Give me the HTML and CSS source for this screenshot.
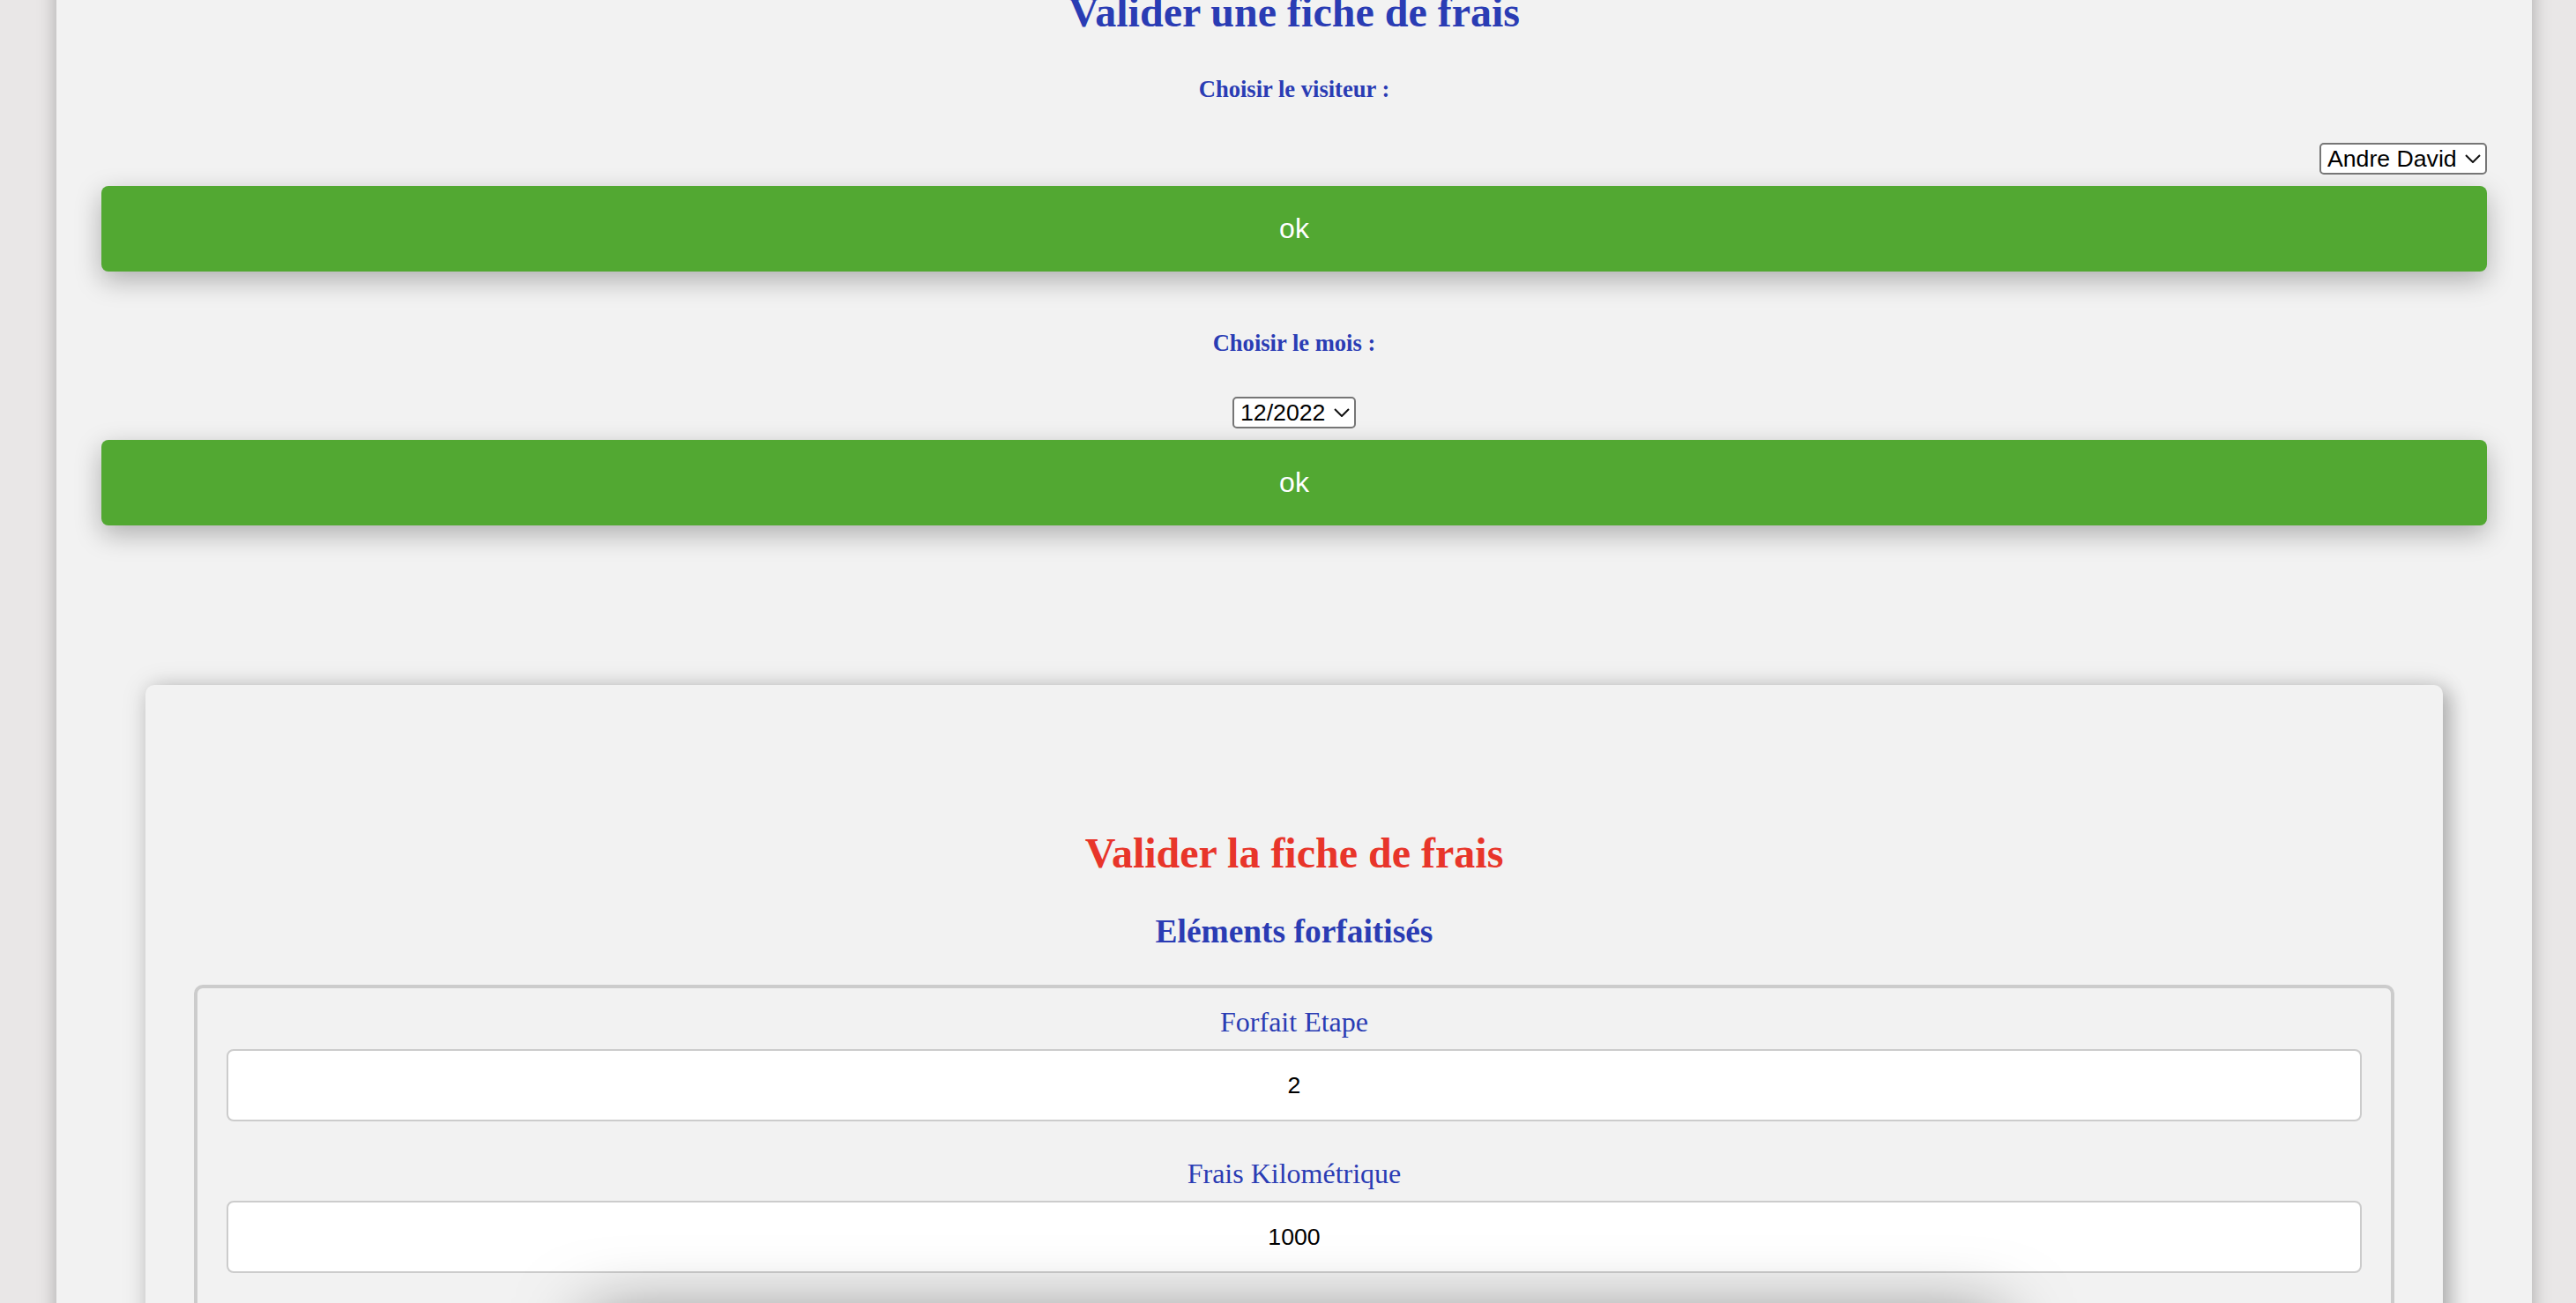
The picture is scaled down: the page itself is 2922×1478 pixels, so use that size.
FILE: index.html
```html
<!DOCTYPE html>
<html lang="fr">
<head>
<meta charset="utf-8">
<title>Valider une fiche de frais</title>
<link rel="stylesheet" href="styles.css">
</head>
<body>
<div class="page">
  <h2 class="title">Valider une fiche de frais</h2>
  <h5 class="label">Choisir le visiteur :</h5>
  <div class="row row-end">
    <span class="select-wrap">
      <select class="sel"><option>Andre David</option></select>
      <svg class="chev" width="18" height="10" viewBox="0 0 18 10"><polyline points="1,1 9,9 17,1" fill="none" stroke="#111" stroke-width="2"/></svg>
    </span>
  </div>
  <button class="ok">ok</button>
  <h5 class="label label-mois">Choisir le mois :</h5>
  <div class="row row-center">
    <span class="select-wrap">
      <select class="sel"><option>12/2022</option></select>
      <svg class="chev" width="18" height="10" viewBox="0 0 18 10"><polyline points="1,1 9,9 17,1" fill="none" stroke="#111" stroke-width="2"/></svg>
    </span>
  </div>
  <button class="ok">ok</button>

  <section class="card">
    <h2 class="card-title">Valider la fiche de frais</h2>
    <h3 class="sub">Eléments forfaitisés</h3>
    <fieldset class="fs">
      <label class="fl" for="etp">Forfait Etape</label>
      <input class="in" id="etp" type="text" value="2">
      <label class="fl fl-next" for="km">Frais Kilométrique</label>
      <input class="in" id="km" type="text" value="1000">
      <div class="next-block"></div>
    </fieldset>
  </section>
</div>
</body>
</html>
```

FILE: styles.css
```css
html {
  overflow: hidden;
}

body {
  margin: 0;
  background: #e9e7e7;
  font-family: "Liberation Serif", "Times New Roman", serif;
}

.page {
  width: 2808px;
  box-sizing: border-box;
  margin: -40px 0 0 64px;
  padding: 26px 51px 400px;
  background: #f2f2f2;
  box-shadow: 0 0 20px rgba(0, 0, 0, 0.28);
}

.title {
  margin: 0;
  font-size: 48px;
  line-height: 56px;
  font-weight: bold;
  color: #2a3cb4;
  text-align: center;
}

.label {
  margin: 43px 0 0;
  font-size: 26.56px;
  line-height: 32px;
  font-weight: bold;
  color: #2a3cb4;
  text-align: center;
}

.label-mois {
  margin-top: 65px;
}

.row {
  display: flex;
  margin-top: 45px;
  height: 36px;
}

.row-end {
  justify-content: flex-end;
}

.row-center {
  justify-content: center;
}

.select-wrap {
  position: relative;
  display: inline-block;
  height: 36px;
}

.sel {
  -webkit-appearance: none;
  appearance: none;
  box-sizing: border-box;
  height: 36px;
  margin: 0;
  padding: 0 32px 0 7px;
  border: 2px solid #767676;
  border-radius: 5px;
  background: #fff;
  color: #000;
  font-family: "Liberation Sans", Arial, sans-serif;
  font-size: 26.67px;
}

.chev {
  position: absolute;
  right: 7px;
  top: 13px;
  pointer-events: none;
}

.ok {
  display: block;
  width: 100%;
  height: 97px;
  margin: 13px 0 0;
  padding: 0;
  border: none;
  border-radius: 8px;
  background: #52a832;
  color: #fff;
  font-family: "Liberation Sans", Arial, sans-serif;
  font-size: 32px;
  box-shadow: 0 10px 30px rgba(0, 0, 0, 0.28);
}

.card {
  margin: 181px 50px 0;
  padding: 163px 55px 0;
  background: #f2f2f2;
  border-radius: 10px;
  box-shadow: 0 0 30px rgba(0, 0, 0, 0.12), 8px 6px 22px rgba(0, 0, 0, 0.24);
}

.card-title {
  margin: 0;
  font-size: 48px;
  line-height: 56px;
  font-weight: bold;
  color: #e8352a;
  text-align: center;
}

.sub {
  margin: 39px 0 0;
  font-size: 37.44px;
  line-height: 44px;
  font-weight: bold;
  color: #2a3cb4;
  text-align: center;
}

.fs {
  margin: 38px 0 0;
  padding: 19px 33px 40px;
  border: 4px solid #cccccc;
  border-radius: 10px;
  min-width: 0;
}

.fl {
  display: block;
  font-size: 32px;
  line-height: 38px;
  color: #2a3cb4;
  text-align: center;
}

.fl-next {
  margin-top: 40px;
}

.in {
  display: block;
  box-sizing: border-box;
  width: 100%;
  height: 82px;
  margin: 12px 0 0;
  padding: 0;
  border: 2px solid #cccccc;
  border-radius: 8px;
  background: #fff;
  color: #000;
  font-family: "Liberation Sans", Arial, sans-serif;
  font-size: 26.67px;
  text-align: center;
}

.next-block {
  position: relative;
  width: 1600px;
  height: 200px;
  margin: 52px auto 0;
  background: #f2f2f2;
  border-radius: 10px;
  box-shadow: 0 0 80px rgba(0, 0, 0, 0.5);
}
```
